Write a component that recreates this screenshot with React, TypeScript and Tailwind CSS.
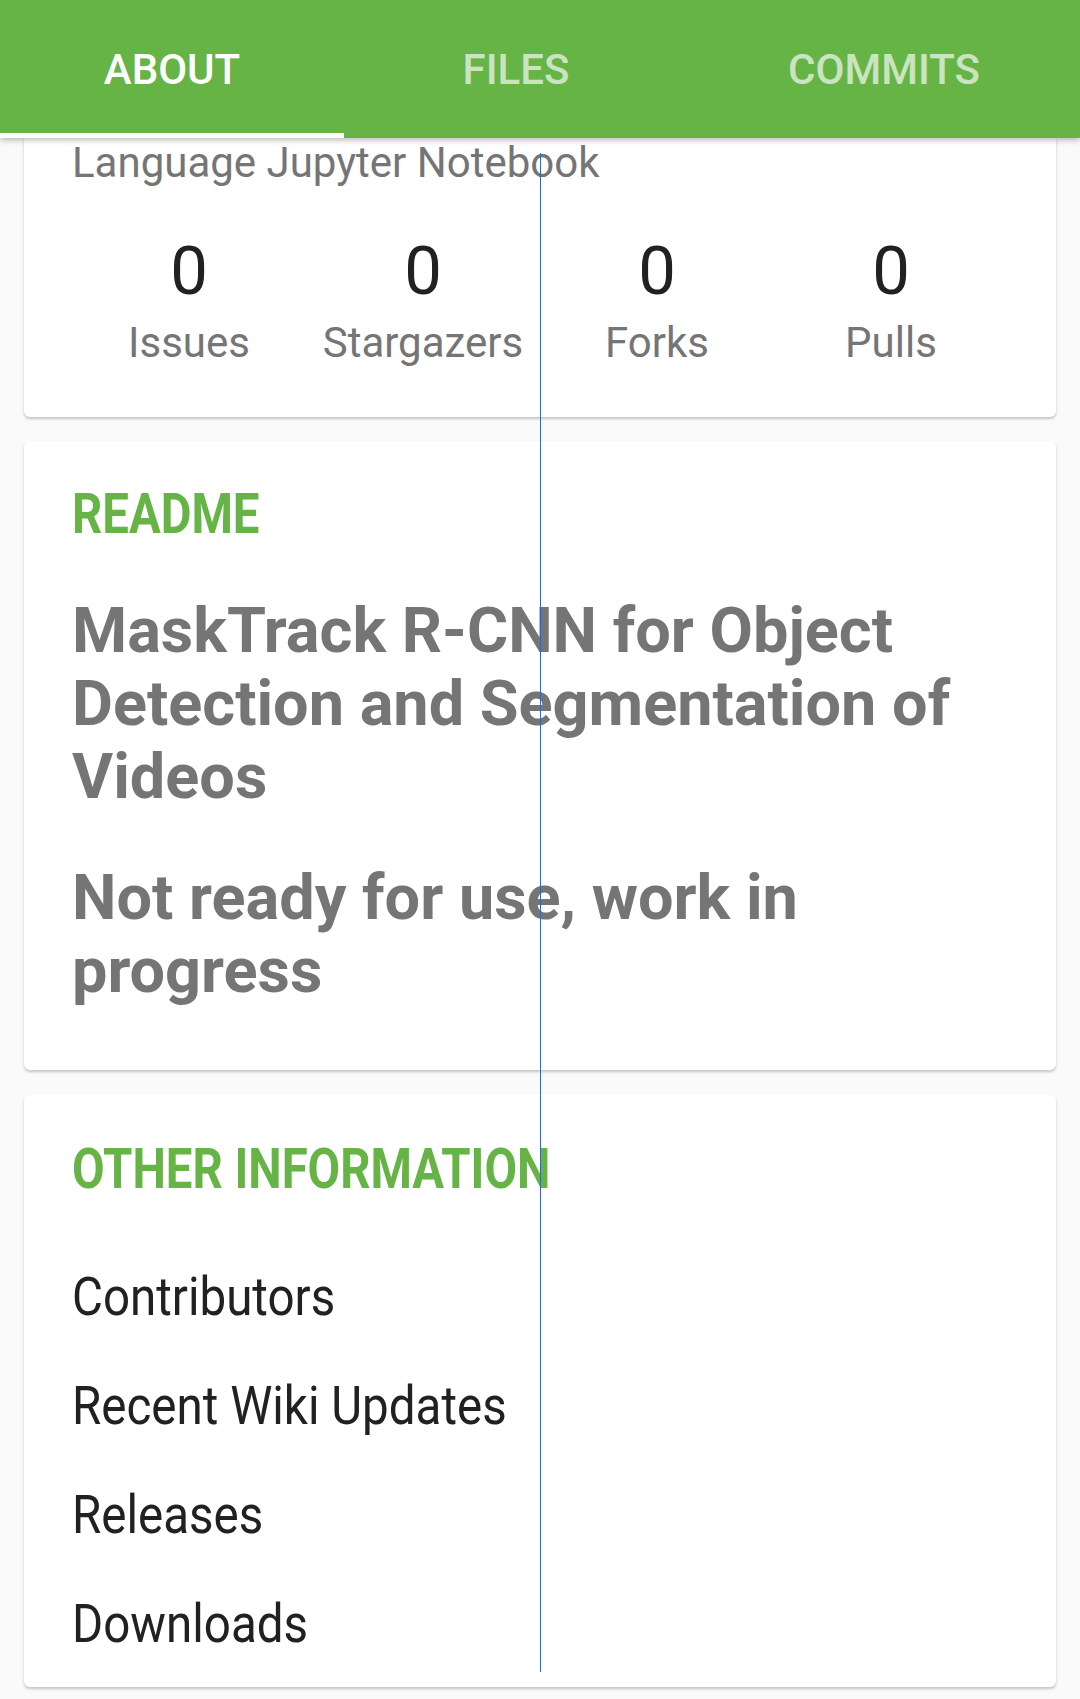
import React from "react";

const font = { fontFamily: "Roboto, 'Noto Sans', sans-serif" };

function Tab({ label, active, width }: { label: string; active?: boolean; width: string }) {
  return (
    <div className={`relative flex items-center justify-center ${width}`}>
      <span className={`text-[42px] font-medium ${active ? "text-white" : "text-white/65"}`}>{label}</span>
      {active && <div className="absolute bottom-0 left-0 right-0 h-[5px] bg-white" />}
    </div>
  );
}

function Stat({ n, label }: { n: string; label: string }) {
  return (
    <div className="flex flex-col items-center">
      <div className="text-[67px] leading-[78px] text-[#212121]">{n}</div>
      <div className="mt-[8px] text-[42px] leading-[49px] text-[#757575]">{label}</div>
    </div>
  );
}

function Condensed({ children, className, scale }: { children: React.ReactNode; className: string; scale: string }) {
  return (
    <div className={className}>
      <span className={`inline-block origin-left whitespace-nowrap ${scale}`}>{children}</span>
    </div>
  );
}

export default function App() {
  return (
    <div className="relative w-[1080px] h-[1699px] overflow-hidden bg-[#fafafa]" style={font}>
      <div className="relative z-10 flex h-[138px] bg-[#66b346] shadow-[0_2px_6px_rgba(0,0,0,0.28)]">
        <Tab label="ABOUT" active width="w-[344px]" />
        <Tab label="FILES" width="w-[344px]" />
        <Tab label="COMMITS" width="flex-1" />
      </div>

      <div className="flex flex-col gap-[24px] px-[24px]">
        <div className="h-[279px] rounded-b-md bg-white px-[48px] shadow-[0_2px_3px_rgba(0,0,0,0.22)]">
          <div className="text-[42px] leading-[49px] text-[#757575]">Language Jupyter Notebook</div>
          <div className="mt-[45px] grid grid-cols-4">
            <Stat n="0" label="Issues" />
            <Stat n="0" label="Stargazers" />
            <Stat n="0" label="Forks" />
            <Stat n="0" label="Pulls" />
          </div>
        </div>

        <div className="h-[629px] rounded-md bg-white px-[48px] pt-[41px] shadow-[0_2px_3px_rgba(0,0,0,0.22)]">
          <Condensed scale="scale-x-[0.86]" className="h-[64px] text-[55px] leading-[64px] font-bold text-[#66b346]">
            README
          </Condensed>
          <div className="mt-[48px] text-[63px] leading-[73px] font-bold text-[#757575]">
            MaskTrack R-CNN for Object Detection and Segmentation of Videos
          </div>
          <div className="mt-[48px] text-[63px] leading-[73px] font-bold text-[#757575]">
            Not ready for use, work in progress
          </div>
        </div>

        <div className="h-[593px] rounded-md bg-white px-[48px] pt-[43px] shadow-[0_2px_3px_rgba(0,0,0,0.22)]">
          <Condensed scale="scale-x-[0.86]" className="h-[64px] text-[55px] leading-[64px] font-bold text-[#66b346]">
            OTHER INFORMATION
          </Condensed>
          <div className="mt-[41px] flex flex-col">
            {["Contributors", "Recent Wiki Updates", "Releases", "Downloads"].map((t) => (
              <Condensed key={t} scale="scale-x-[0.88]" className="h-[109px] text-[54px] leading-[109px] text-[#212121]">
                {t}
              </Condensed>
            ))}
          </div>
        </div>
      </div>

      <div className="absolute left-[540px] top-[153px] h-[1519px] w-px bg-[#1f66ff]" />
    </div>
  );
}
